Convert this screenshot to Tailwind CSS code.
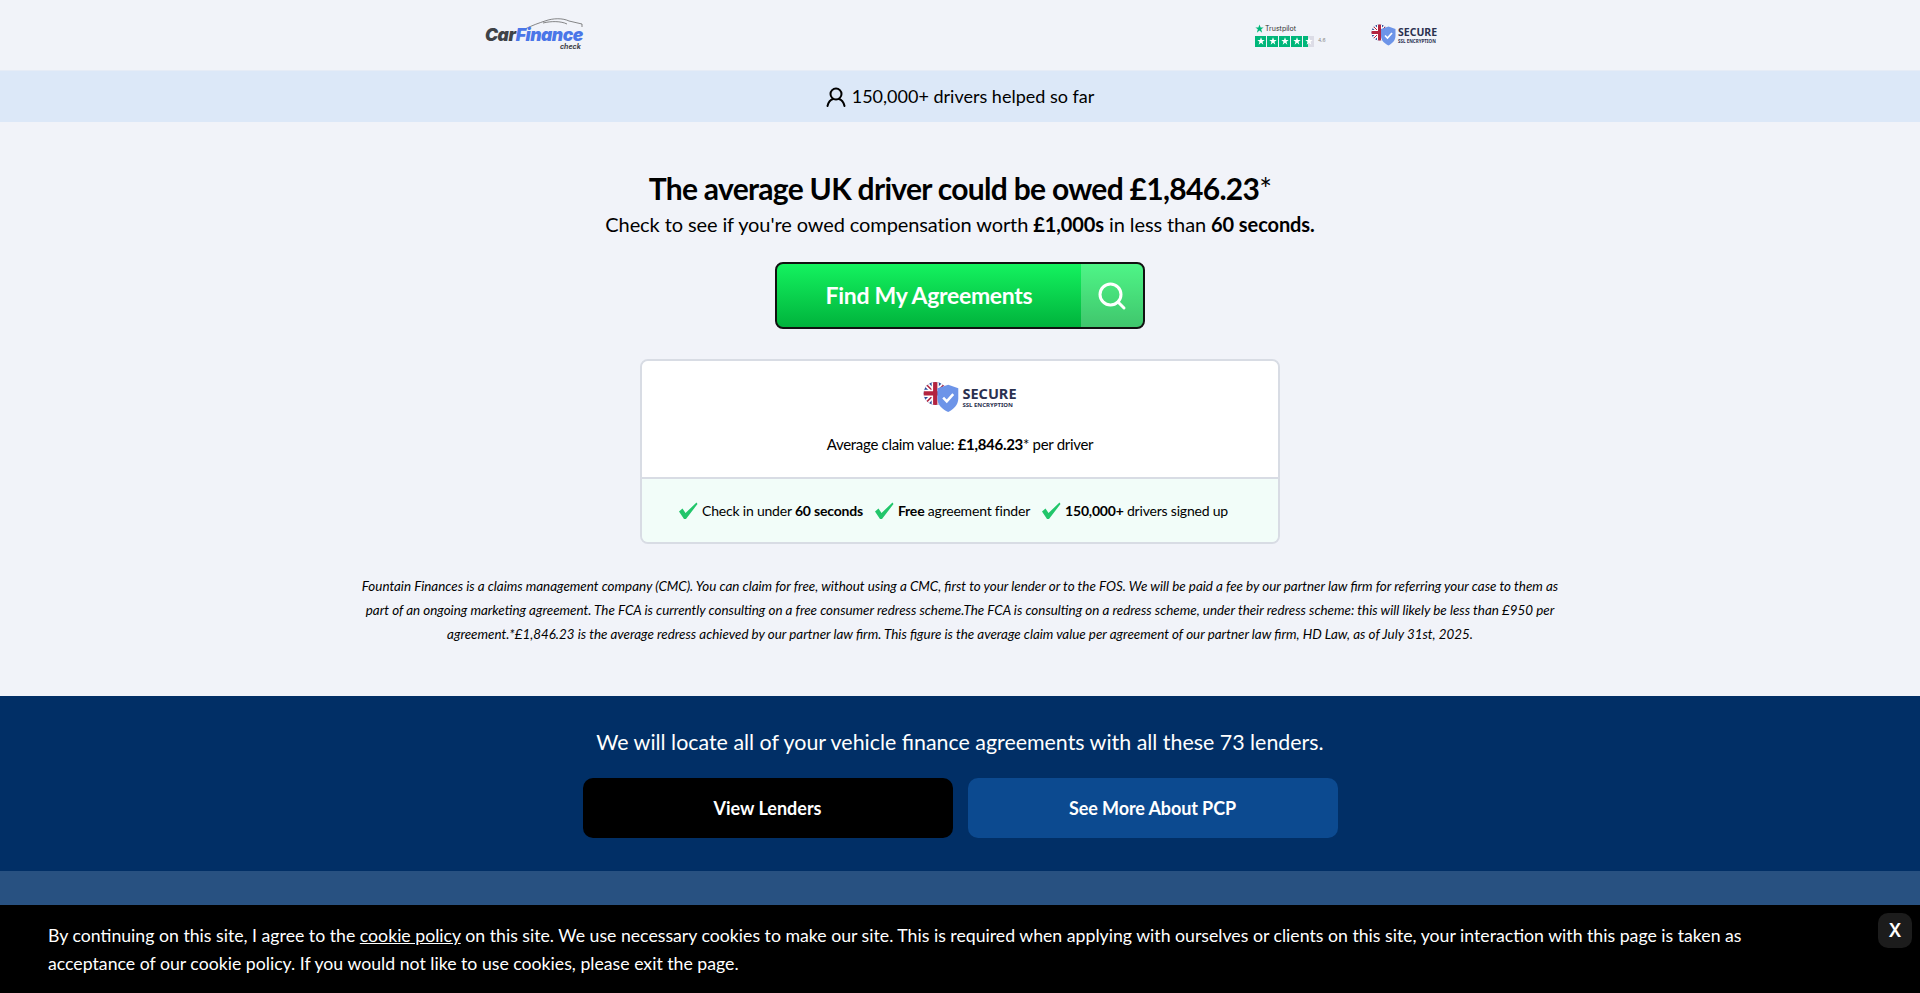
<!DOCTYPE html>
<html lang="en"><head><meta charset="utf-8"><title>Car Finance Check</title>
<script src="https://cdn.jsdelivr.net/npm/@tailwindcss/browser@4"></script></head>
<body class="bg-[#f1f3f9] text-black font-['Lato',sans-serif] h-[993px] overflow-hidden flex flex-col">
<svg width="0" height="0" class="absolute"><defs>
<clipPath id="fc"><circle cx="17" cy="17" r="16"/></clipPath>
<g id="secure-mark"><g clip-path="url(#fc)"><rect width="34" height="34" fill="#2c4a9a"/><path d="M0 0L34 34M34 0L0 34" stroke="#fff" stroke-width="7"/><path d="M0 0L34 34M34 0L0 34" stroke="#b3233f" stroke-width="2"/><path d="M17 0V34M0 17H34" stroke="#fff" stroke-width="10"/><path d="M17 0V34M0 17H34" stroke="#b3233f" stroke-width="6"/></g><path d="M20 10L35 5L49 10V24C49 33 42 39 35 43C27 39 20 33 20 24z" fill="#6d94e8"/><path d="M28 23L33 28L42 18" stroke="#fff" stroke-width="3.500" fill="none"/></g>
<path id="tp" d="M12 1l3 8h8l-6.500 5 2.500 9-7-5.500L5 23l2.500-9L1 9h8z"/>
<path id="chk" d="M1 9.500L4.500 6.500L7.500 11L18.500 0.500L19.500 2L8 17H6z"/>
</defs></svg>
<header class="h-[70px] flex items-center justify-center">
  <div class="w-[960px] flex items-center justify-between pl-[5px] pr-[5px]">
    <div class="relative w-[100px] h-[30px]">
      <svg class="absolute left-[40px] top-[-3px]" width="58" height="14" viewBox="0 0 58 14" fill="none" stroke="#555" stroke-width="0.7"><path d="M0 12C8 8 14 6 20 4C28 1 38 1 44 4L57 7V10"/><path d="M18 6C26 4 36 4 42 7"/></svg>
      <div class="absolute left-0 top-[5px] font-['Inter',sans-serif] italic font-black text-[17.500px] leading-[20px] tracking-[-0.5px] whitespace-nowrap"><span class="text-[#3f4247]">Car</span><span class="text-[#4a76e8]">Finance</span></div>
      <div class="absolute left-[75px] top-[23px] font-['Inter',sans-serif] italic font-bold text-[7px] leading-[8px] text-[#3f4247]">check</div>
    </div>
    <div class="flex items-center gap-[44px]">
      <div class="w-[72px]">
        <div class="flex items-center gap-[1px] h-[10px]"><svg width="9" height="9" viewBox="0 0 24 24" fill="#00b67a"><use href="#tp"/></svg><span class="font-['Inter',sans-serif] text-[7px] leading-[10px] text-[#333]">Trustpilot</span></div>
        <div class="flex items-center gap-[1px] mt-[2px]">
          <span class="w-[11px] h-[11px] bg-[#00b67a] flex items-center justify-center"><svg width="8" height="8" viewBox="0 0 24 24" fill="#fff"><use href="#tp"/></svg></span>
          <span class="w-[11px] h-[11px] bg-[#00b67a] flex items-center justify-center"><svg width="8" height="8" viewBox="0 0 24 24" fill="#fff"><use href="#tp"/></svg></span>
          <span class="w-[11px] h-[11px] bg-[#00b67a] flex items-center justify-center"><svg width="8" height="8" viewBox="0 0 24 24" fill="#fff"><use href="#tp"/></svg></span>
          <span class="w-[11px] h-[11px] bg-[#00b67a] flex items-center justify-center"><svg width="8" height="8" viewBox="0 0 24 24" fill="#fff"><use href="#tp"/></svg></span>
          <span class="w-[11px] h-[11px] bg-[linear-gradient(90deg,#00b67a_50%,#dcdce6_50%)] flex items-center justify-center"><svg width="8" height="8" viewBox="0 0 24 24" fill="#fff"><use href="#tp"/></svg></span>
          <span class="font-['Inter',sans-serif] text-[5px] text-[#888] ml-[3px]">4.6</span>
        </div>
      </div>
      <div class="flex items-center w-[64px] h-[24px]">
        <svg class="shrink-0" width="25" height="22" viewBox="0 0 50 44"><use href="#secure-mark"/></svg>
        <div class="ml-[2px] font-['Noto_Sans',sans-serif] text-[#2b3150]"><div class="text-[10.500px] leading-[11px] font-bold">SECURE</div><div class="text-[4.500px] leading-[6px] font-bold whitespace-nowrap">SSL ENCRYPTION</div></div>
      </div>
    </div>
  </div>
</header>
<div class="h-[52px] bg-[#dce8f8] border-t border-[#e6ecf6] flex items-center justify-center gap-[6px] text-[18px]">
  <svg width="20" height="20" viewBox="0 0 20 20" fill="none" stroke="#000" stroke-width="2"><circle cx="10" cy="7" r="5.500"/><path d="M1.500 19C2.500 15 5 12.500 7 12M18.500 19C17.500 15 15 12.500 13 12" stroke-linecap="round"/></svg>
  <span>150,000+ drivers helped so far</span>
</div>
<main class="flex-1 flex flex-col items-center">
  <h1 class="mt-[46px] text-[30px] leading-[40px] font-bold tracking-[-0.7px]">The average UK driver could be owed £1,846.23<span class="font-normal">*</span></h1>
  <p class="mt-[2px] text-[20px] leading-[28px] tracking-[-0.1px]">Check to see if you're owed compensation worth <b>£1,000s</b> in less than <b>60 seconds.</b></p>
  <button class="mt-[24px] w-[370px] h-[67px] rounded-[8px] border-2 border-[#111] bg-[linear-gradient(180deg,#14f25f,#00b33c)] text-white flex overflow-hidden">
    <span class="w-[304px] h-full flex items-center justify-center text-[23px] font-bold tracking-[-0.3px]">Find My Agreements</span>
    <span class="flex-1 h-full bg-white/25 flex items-center justify-center"><svg width="30" height="30" viewBox="0 0 30 30" fill="none" stroke="#fff" stroke-width="3" stroke-linecap="round"><circle cx="13.500" cy="13.500" r="10.500"/><path d="M21.500 21.500L27 27"/></svg></span>
  </button>
  <section class="mt-[30px] w-[640px] h-[185px] rounded-[8px] border-2 border-[#d8dce4] overflow-hidden flex flex-col">
    <div class="h-[116px] bg-white flex flex-col items-center">
      <div class="mt-[20px] flex items-center ml-[20px]">
        <svg class="shrink-0" width="36" height="32" viewBox="0 0 50 44"><use href="#secure-mark"/></svg>
        <div class="ml-[3px] font-['Noto_Sans',sans-serif] text-[#2b3150]"><div class="text-[14.500px] leading-[15px] font-bold">SECURE</div><div class="text-[6px] leading-[8px] font-bold whitespace-nowrap">SSL ENCRYPTION</div></div>
      </div>
      <p class="mt-[20px] text-[15px] leading-[22px] tracking-[-0.3px]">Average claim value: <b>£1,846.23</b>* per driver</p>
    </div>
    <div class="flex-1 bg-[#f2fdf9] border-t-2 border-[#d8dce4] flex items-center justify-center gap-[11px] pr-[14px] text-[14px] tracking-[-0.2px]">
      <span class="flex items-center gap-[4px]"><svg width="20" height="18" viewBox="0 0 20 18" fill="#22c66b"><use href="#chk"/></svg><span>Check in under <b>60 seconds</b></span></span>
      <span class="flex items-center gap-[4px]"><svg width="20" height="18" viewBox="0 0 20 18" fill="#22c66b"><use href="#chk"/></svg><span><b>Free</b> agreement finder</span></span>
      <span class="flex items-center gap-[4px]"><svg width="20" height="18" viewBox="0 0 20 18" fill="#22c66b"><use href="#chk"/></svg><span><b>150,000+</b> drivers signed up</span></span>
    </div>
  </section>
  <p class="mt-[30px] w-[1210px] text-center text-[13.400px] leading-[24px] italic">Fountain Finances is a claims management company (CMC). You can claim for free, without using a CMC, first to your lender or to the FOS. We will be paid a fee by our partner law firm for referring your case to them as part of an ongoing marketing agreement. The FCA is currently consulting on a free consumer redress scheme.The FCA is consulting on a redress scheme, under their redress scheme: this will likely be less than £950 per agreement.*£1,846.23 is the average redress achieved by our partner law firm. This figure is the average claim value per agreement of our partner law firm, HD Law, as of July 31st, 2025.</p>
</main>
<section class="h-[175px] bg-[#012f66] flex flex-col items-center text-white shrink-0">
  <p class="mt-[31px] text-[21.400px] leading-[30px]">We will locate all of your vehicle finance agreements with all these 73 lenders.</p>
  <div class="mt-[21px] flex gap-[15px]">
    <button class="w-[370px] h-[60px] rounded-[10px] bg-black text-[18px] font-bold text-white pt-[1px]">View Lenders</button>
    <button class="w-[370px] h-[60px] rounded-[10px] bg-[#0c4a90] text-[18px] font-bold text-white pt-[1px] tracking-[-0.1px]">See More About PCP</button>
  </div>
</section>
<div class="h-[34px] bg-[#285181] shrink-0"></div>
<div class="h-[88px] bg-black text-white shrink-0 flex items-start pl-[48px] pr-[8px] text-[17.700px] leading-[28px]">
  <p class="w-[1740px] pt-[17px]">By continuing on this site, I agree to the <a class="underline" href="#">cookie policy</a> on this site. We use necessary cookies to make our site. This is required when applying with ourselves or clients on this site, your interaction with this page is taken as acceptance of our cookie policy. If you would not like to use cookies, please exit the page.</p>
  <button class="ml-auto mt-[8px] w-[34px] h-[35px] rounded-[10px] bg-[#1c1c1c] text-white text-[18px] font-semibold font-['Inter',sans-serif]">X</button>
</div>
</body></html>
